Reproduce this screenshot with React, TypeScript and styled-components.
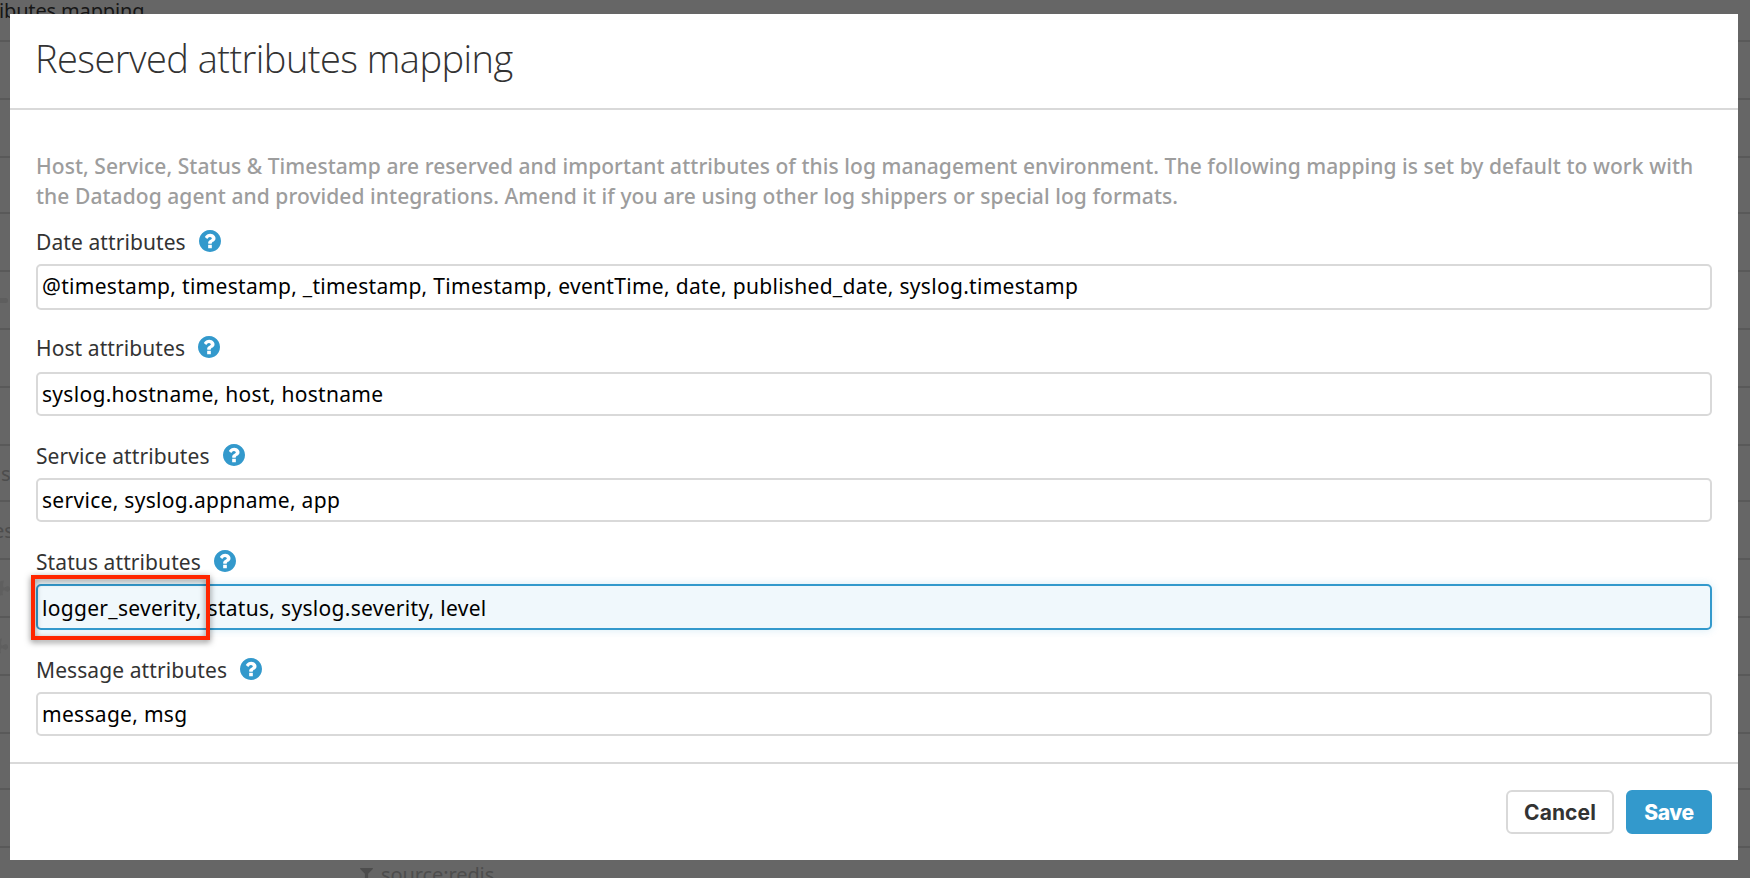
import React from 'react';
import styled, { createGlobalStyle } from 'styled-components';
import { FaFilter, FaPuzzlePiece } from 'react-icons/fa';

const GlobalStyle = createGlobalStyle`
  * { box-sizing: border-box; }
  body {
    margin: 0;
    overflow: hidden;
    background: #666;
    font-family: "Noto Sans", "Open Sans", sans-serif;
    font-size: 21px;
    color: #333;
  }
`;

const Screen = styled.div`
  position: relative;
  width: 1750px;
  height: 878px;
  overflow: hidden;
  background: #666;
`;

const PipelineHeading = styled.div`
  height: 40px;
  margin-left: -1px;
  font-size: 20px;
  line-height: 21px;
  letter-spacing: -0.15px;
  color: #161616;
`;

const PipelineRow = styled.div<{ $height: number; $indent: number }>`
  display: flex;
  align-items: center;
  gap: 8px;
  height: ${(p) => p.$height}px;
  padding-left: ${(p) => Math.max(p.$indent, 0)}px;
  text-indent: ${(p) => Math.min(p.$indent, 0)}px;
  border-top: 2px solid #595959;
  color: #4d4d4d;
  font-size: 20px;
  letter-spacing: -0.1px;
`;

const DragMark = styled.i`
  width: 8px;
  height: 5px;
  border-radius: 0 3px 3px 0;
  background: #5e5e5e;
`;

const PuzzleMark = styled(FaPuzzlePiece)<{ $shift: number }>`
  flex: none;
  width: 24px;
  height: 24px;
  margin-left: ${(p) => p.$shift}px;
  margin-top: -6px;
  color: #5f5f5f;
`;

const SourceFilter = styled.span`
  display: flex;
  align-items: center;
  gap: 8px;
  margin-top: -3px;
`;

const FilterMark = styled(FaFilter)`
  width: 13px;
  height: 17px;
  color: #4d4d4d;
`;

const Modal = styled.section`
  position: absolute;
  top: 14px;
  left: 10px;
  width: 1728px;
  height: 846px;
  display: flex;
  flex-direction: column;
  background: #fff;
`;

const ModalHeader = styled.header`
  height: 96px;
  padding-left: 25px;
  border-bottom: 2px solid #d9d9d9;
`;

const Title = styled.h1`
  margin: 0;
  font: 300 38px/89px "Open Sans", sans-serif;
  letter-spacing: -0.55px;
`;

const ModalBody = styled.div`
  height: 652px;
  padding: 41px 26px 0;
`;

const Intro = styled.p`
  margin: 0 -10px 0 0;
  font-weight: 500;
  line-height: 30px;
  letter-spacing: 0.065px;
  color: #9d9d9d;
`;

const Field = styled.div<{ $before: number }>`
  margin-top: ${(p) => p.$before}px;
`;

const LabelRow = styled.div<{ $after: number }>`
  display: flex;
  align-items: center;
  gap: 13px;
  height: 28px;
  margin-bottom: ${(p) => p.$after}px;
`;

const Label = styled.label`
  line-height: 28px;
  letter-spacing: 0.09px;
  color: #333;
`;

const HelpSvg = styled.svg`
  width: 22px;
  height: 22px;
  margin-top: -2px;
  fill: #3399cc;
`;

const InputBox = styled.div`
  position: relative;
  display: flex;
`;

const Input = styled.input<{ $height: number; $nudge?: number; $active?: boolean }>`
  width: 100%;
  height: ${(p) => p.$height}px;
  padding: ${(p) => Math.max(p.$nudge ?? 0, 0)}px 4px ${(p) => Math.max(-(p.$nudge ?? 0), 0)}px;
  border: 2px solid ${(p) => (p.$active ? '#3399cc' : '#d9d9d9')};
  border-radius: 5px;
  outline: none;
  background: ${(p) => (p.$active ? '#f0f8fc' : '#fff')};
  box-shadow: ${(p) => (p.$active ? '0 0 8px rgba(51, 153, 204, 0.2)' : 'none')};
  font: 400 21px "Noto Sans", sans-serif;
  letter-spacing: 0.3px;
  color: #000;
`;

const Callout = styled.div`
  position: absolute;
  left: -5px;
  top: -9px;
  width: 179px;
  height: 65px;
  border: 4px solid #ff2600;
  filter: drop-shadow(0 2px 3px rgba(0, 0, 0, 0.5));
`;

const ModalFooter = styled.footer`
  display: flex;
  flex: 1;
  justify-content: flex-end;
  align-items: flex-start;
  gap: 12px;
  padding: 26px 26px 0;
  border-top: 2px solid #d9d9d9;
`;

const Button = styled.button<{ $primary?: boolean }>`
  width: ${(p) => (p.$primary ? 86 : 108)}px;
  height: 44px;
  padding: 0;
  border: 2px solid ${(p) => (p.$primary ? '#3399cc' : '#d9d9d9')};
  border-radius: 6px;
  background: ${(p) => (p.$primary ? '#3399cc' : '#fff')};
  color: ${(p) => (p.$primary ? '#fff' : '#333')};
  font: ${(p) => (p.$primary ? 800 : 700)} 21px Inter, sans-serif;
  letter-spacing: ${(p) => (p.$primary ? -0.35 : 0.1)}px;
`;

const HelpIcon = () => (
  <HelpSvg viewBox="128 128 1536 1536" aria-hidden="true">
    <path d="M1024 1376v-192q0-14-9-23t-23-9h-192q-14 0-23 9t-9 23v192q0 14 9 23t23 9h192q14 0 23-9t9-23zm256-672q0-88-55.500-163t-138.500-116-170-41q-243 0-371 213-15 24 8 42l132 100q7 6 19 6 16 0 25-12 53-68 86-92 34-24 86-24 48 0 85.500 26t37.500 59q0 38-20 61t-68 45q-63 28-115.500 86.500t-52.500 125.500v36q0 14 9 23t23 9h192q14 0 23-9t9-23q0-19 21.500-49.500t54.500-49.500q32-18 49-28.500t46-35 44.500-48 28-60.500 12.500-81zm384 192q0 209-103 385.500t-279.500 279.500-385.500 103-385.500-103-279.500-279.500-103-385.500 103-385.500 279.500-279.500 385.500-103 385.500 103 279.500 279.500 103 385.500z" />
  </HelpSvg>
);

type Row = { height: number; indent?: number; content?: React.ReactNode };

const rows: Row[] = [
  { height: 58 },
  { height: 58 },
  { height: 56 },
  { height: 58 },
  { height: 58, content: <DragMark /> },
  { height: 58 },
  { height: 58 },
  { height: 56, indent: 1, content: 's' },
  { height: 58, indent: -7, content: 'es' },
  { height: 58, content: <PuzzleMark $shift={-14} /> },
  { height: 58, content: <PuzzleMark $shift={-16} /> },
  { height: 58 },
  { height: 56 },
  { height: 58 },
  { height: 58, indent: 360, content: <SourceFilter><FilterMark />source:redis</SourceFilter> },
];

type FieldSpec = {
  id: string;
  label: string;
  value: string;
  before: number;
  after: number;
  height: number;
  nudge?: number;
  active?: boolean;
};

const fields: FieldSpec[] = [
  { id: 'date', label: 'Date attributes', value: '@timestamp, timestamp, _timestamp, Timestamp, eventTime, date, published_date, syslog.timestamp', before: 17, after: 8, height: 46, nudge: -2 },
  { id: 'host', label: 'Host attributes', value: 'syslog.hostname, host, hostname', before: 24, after: 10, height: 44 },
  { id: 'service', label: 'Service attributes', value: 'service, syslog.appname, app', before: 26, after: 8, height: 44 },
  { id: 'status', label: 'Status attributes', value: 'logger_severity, status, syslog.severity, level', before: 26, after: 8, height: 46, nudge: 1, active: true },
  { id: 'message', label: 'Message attributes', value: 'message, msg', before: 26, after: 8, height: 44 },
];

export default function App() {
  return (
    <>
      <GlobalStyle />
      <Screen>
        <PipelineHeading>ibutes mapping</PipelineHeading>
        {rows.map((row, i) => (
          <PipelineRow key={i} $height={row.height} $indent={row.indent ?? 0}>
            {row.content}
          </PipelineRow>
        ))}
        <Modal>
          <ModalHeader>
            <Title>Reserved attributes mapping</Title>
          </ModalHeader>
          <ModalBody>
            <Intro>
              Host, Service, Status &amp; Timestamp are reserved and important attributes of this log
              management environment. The following mapping is set by default to work with
              <br />
              the Datadog agent and provided integrations. Amend it if you are using other log
              shippers or special log formats.
            </Intro>
            {fields.map((f) => (
              <Field key={f.id} $before={f.before}>
                <LabelRow $after={f.after}>
                  <Label htmlFor={f.id}>{f.label}</Label>
                  <HelpIcon />
                </LabelRow>
                <InputBox>
                  <Input
                    id={f.id}
                    defaultValue={f.value}
                    spellCheck={false}
                    $height={f.height}
                    $nudge={f.nudge}
                    $active={f.active}
                  />
                  {f.active && <Callout />}
                </InputBox>
              </Field>
            ))}
          </ModalBody>
          <ModalFooter>
            <Button>Cancel</Button>
            <Button $primary>Save</Button>
          </ModalFooter>
        </Modal>
      </Screen>
    </>
  );
}
